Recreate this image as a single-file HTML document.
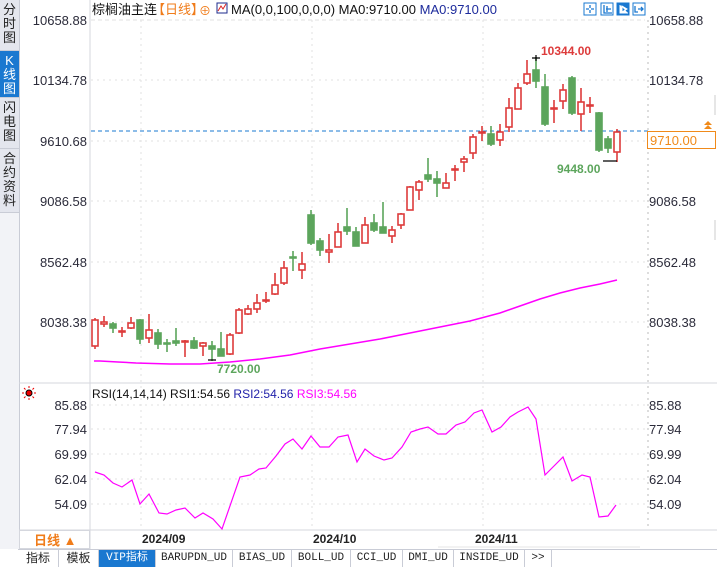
<!DOCTYPE html>
<html><head><meta charset="utf-8"><style>
html,body{margin:0;padding:0;width:717px;height:566px;overflow:hidden;background:#fff;font-family:"Liberation Sans","Noto Sans CJK SC",sans-serif}
.side{position:absolute;left:0;top:0;width:19px;height:549px;background:#f2f3f7;border-right:1px solid #c9ccd6}
.tab{position:absolute;left:0;width:19px;font-size:13px;line-height:14px;text-align:center;color:#222;background:#e4e6ee;border-bottom:1px solid #c9ccd6;padding-top:3px;box-sizing:border-box}
.bar{position:absolute;left:18px;top:549px;width:699px;height:17px;background:#fff;border-top:1px solid #c9ccd6;font-size:12px}
.bt{position:absolute;top:0;height:17px;line-height:17px;text-align:center;border-right:1px solid #c9ccd6;color:#222;font-family:"Liberation Mono","Noto Sans CJK SC",monospace;font-size:11px}
</style></head><body>
<div class="side">
<div class="tab" style="top:0;height:51px">分<br>时<br>图</div>
<div class="tab" style="top:51px;height:47px;background:#1a78d0;color:#fff">K<br>线<br>图</div>
<div class="tab" style="top:98px;height:51px">闪<br>电<br>图</div>
<div class="tab" style="top:149px;height:64px">合<br>约<br>资<br>料</div>
</div>
<svg width="717" height="566" style="position:absolute;left:0;top:0" font-family="Liberation Sans, Noto Sans CJK SC, sans-serif">
<g stroke="#e2e2e2" stroke-dasharray="2,4" stroke-width="1">
<line x1="91" y1="20" x2="645" y2="20" stroke-dasharray="4,3"/>
<line x1="91" y1="80" x2="645" y2="80"/><line x1="91" y1="141" x2="645" y2="141"/><line x1="91" y1="201" x2="645" y2="201"/><line x1="91" y1="262" x2="645" y2="262"/><line x1="91" y1="322" x2="645" y2="322"/>
<line x1="91" y1="405" x2="645" y2="405"/><line x1="91" y1="429" x2="645" y2="429"/><line x1="91" y1="454" x2="645" y2="454"/><line x1="91" y1="479" x2="645" y2="479"/><line x1="91" y1="504" x2="645" y2="504"/>
<line x1="141" y1="20" x2="141" y2="530"/><line x1="312" y1="20" x2="312" y2="530"/><line x1="483" y1="20" x2="483" y2="530"/>
<line x1="648" y1="20" x2="648" y2="530" stroke="#bbb"/>
</g>
<line x1="90" y1="0" x2="90" y2="549" stroke="#d5d7de"/>
<line x1="19" y1="383" x2="717" y2="383" stroke="#d5d7de"/>
<line x1="19" y1="530" x2="717" y2="530" stroke="#d5d7de"/>
<line x1="715" y1="95" x2="715" y2="115" stroke="#ccc"/><line x1="715" y1="220" x2="715" y2="240" stroke="#ccc"/>
<g font-size="13" fill="#2b2b3a" text-anchor="end">
<text x="87" y="25">10658.88</text><text x="87" y="85">10134.78</text><text x="87" y="146">9610.68</text><text x="87" y="206">9086.58</text><text x="87" y="267">8562.48</text><text x="87" y="327">8038.38</text>
<text x="87" y="410">85.88</text><text x="87" y="434">77.94</text><text x="87" y="459">69.99</text><text x="87" y="484">62.04</text><text x="87" y="509">54.09</text>
</g>
<g font-size="13" fill="#2b2b3a">
<text x="649" y="25">10658.88</text><text x="649" y="85">10134.78</text><text x="649" y="206">9086.58</text><text x="649" y="267">8562.48</text><text x="649" y="327">8038.38</text>
<text x="649" y="410">85.88</text><text x="649" y="434">77.94</text><text x="649" y="459">69.99</text><text x="649" y="484">62.04</text><text x="649" y="509">54.09</text>
</g>
<text x="92" y="14" font-size="13" fill="#111">棕榈油主连</text>
<text x="152" y="14" font-size="13" fill="#f07c1a">【日线】</text>
<text x="199" y="15" font-size="12" fill="#f07c1a">⊕</text>
<rect x="217" y="3" width="10" height="10" fill="#fff" stroke="#1d2b8c"/><polyline points="218,11 221,6 223,9 226,4" fill="none" stroke="#d22" stroke-width="1"/>
<text x="231" y="14" font-size="13" fill="#111">MA(0,0,100,0,0,0)  MA0:9710.00  <tspan fill="#1d2b9c">MA0:9710.00</tspan></text>
<g stroke="#1a78d0" fill="#fff"><rect x="584" y="3" width="12" height="12"/><rect x="601" y="3" width="12" height="12"/><rect x="617" y="3" width="12" height="12" fill="#1a78d0"/><rect x="633" y="3" width="12" height="12"/></g>
<g stroke="#1a78d0" stroke-width="1.3" fill="none"><path d="M590 5v3M590 10v3M586 9h3M591 9h3"/><path d="M604 5v8h8M607 6v6M606 9h5"/><path d="M635 6v6h3M638 9h5M641 7l2 2-2 2"/></g>
<path d="M620 5v8h8M622 6l5 3-5 3z" stroke="#fff" fill="#fff" stroke-width="1"/>
<line x1="91" y1="131" x2="648" y2="131" stroke="#1a78d0" stroke-dasharray="4,3"/>
<polyline fill="none" stroke="#f0f" stroke-width="1.5" points="94,361 100,361 118,362 136,363 170,364 200,364 230,362 260,359 290,355 320,349 350,344 380,339 410,333 440,327 470,321 500,313 520,306 540,299 560,293 580,288 600,284 617,280"/>
<g id="c" stroke-width="1.6">
<g stroke="#dd3b3b" fill="#fff">
<line x1="95" y1="318" x2="95" y2="349"/><rect x="92" y="320" width="6" height="26"/>
<line x1="104" y1="316" x2="104" y2="327"/><rect x="101" y="322" width="6" height="2"/>
<line x1="122" y1="327" x2="122" y2="337"/><rect x="119" y="331" width="6" height="1"/>
<line x1="131" y1="317" x2="131" y2="329"/><rect x="128" y="323" width="6" height="5"/>
<line x1="149" y1="314" x2="149" y2="343"/><rect x="146" y="330" width="6" height="8"/>
<line x1="185" y1="340" x2="185" y2="357"/><rect x="182" y="341" width="6" height="1"/>
<line x1="203" y1="342" x2="203" y2="356"/><rect x="200" y="343" width="6" height="3"/>
<line x1="230" y1="333" x2="230" y2="355"/><rect x="227" y="335" width="6" height="19"/>
<line x1="239" y1="308" x2="239" y2="334"/><rect x="236" y="310" width="6" height="23"/>
<line x1="248" y1="305" x2="248" y2="315"/><rect x="245" y="309" width="6" height="5"/>
<line x1="257" y1="294" x2="257" y2="313"/><rect x="254" y="303" width="6" height="6"/>
<line x1="266" y1="292" x2="266" y2="303"/><rect x="263" y="300" width="6" height="1"/>
<line x1="275" y1="273" x2="275" y2="295"/><rect x="272" y="285" width="6" height="9"/>
<line x1="284" y1="261" x2="284" y2="285"/><rect x="281" y="268" width="6" height="15"/>
<line x1="302" y1="252" x2="302" y2="279"/><rect x="299" y="264" width="6" height="6"/>
<line x1="329" y1="234" x2="329" y2="263"/><rect x="326" y="250" width="6" height="2"/>
<line x1="338" y1="223" x2="338" y2="247"/><rect x="335" y="232" width="6" height="15"/>
<line x1="365" y1="217" x2="365" y2="243"/><rect x="362" y="225" width="6" height="18"/>
<line x1="392" y1="226" x2="392" y2="243"/><rect x="389" y="230" width="6" height="6"/>
<line x1="401" y1="213" x2="401" y2="229"/><rect x="398" y="214" width="6" height="11"/>
<line x1="410" y1="186" x2="410" y2="210"/><rect x="407" y="187" width="6" height="23"/>
<line x1="419" y1="180" x2="419" y2="200"/><rect x="416" y="182" width="6" height="8"/>
<line x1="446" y1="173" x2="446" y2="188"/><rect x="443" y="183" width="6" height="5"/>
<line x1="455" y1="165" x2="455" y2="181"/><rect x="452" y="169" width="6" height="1"/>
<line x1="464" y1="156" x2="464" y2="172"/><rect x="461" y="159" width="6" height="3"/>
<line x1="473" y1="134" x2="473" y2="159"/><rect x="470" y="137" width="6" height="16"/>
<line x1="482" y1="126" x2="482" y2="141"/><rect x="479" y="132" width="6" height="1"/>
<line x1="500" y1="124" x2="500" y2="146"/><rect x="497" y="132" width="6" height="8"/>
<line x1="509" y1="98" x2="509" y2="132"/><rect x="506" y="108" width="6" height="19"/>
<line x1="518" y1="83" x2="518" y2="109"/><rect x="515" y="88" width="6" height="21"/>
<line x1="527" y1="60" x2="527" y2="85"/><rect x="524" y="74" width="6" height="9"/>
<line x1="554" y1="100" x2="554" y2="123"/><rect x="551" y="108" width="6" height="1"/>
<line x1="563" y1="84" x2="563" y2="109"/><rect x="560" y="90" width="6" height="11"/>
<line x1="581" y1="88" x2="581" y2="131"/><rect x="578" y="102" width="6" height="12"/>
<line x1="590" y1="97" x2="590" y2="113"/><rect x="587" y="105" width="6" height="1"/>
<line x1="617" y1="129" x2="617" y2="162"/><rect x="614" y="132" width="6" height="20"/>
</g>
<g stroke="#5ca55c" fill="#5ca55c">
<line x1="113" y1="322" x2="113" y2="333"/><rect x="110" y="324" width="6" height="4"/>
<line x1="140" y1="319" x2="140" y2="344"/><rect x="137" y="320" width="6" height="19"/>
<line x1="158" y1="329" x2="158" y2="349"/><rect x="155" y="333" width="6" height="11"/>
<line x1="167" y1="339" x2="167" y2="352"/><rect x="164" y="343" width="6" height="1"/>
<line x1="176" y1="328" x2="176" y2="346"/><rect x="173" y="341" width="6" height="2"/>
<line x1="194" y1="337" x2="194" y2="349"/><rect x="191" y="341" width="6" height="7"/>
<line x1="212" y1="341" x2="212" y2="361"/><rect x="209" y="346" width="6" height="3"/>
<line x1="221" y1="332" x2="221" y2="356"/><rect x="218" y="349" width="6" height="7"/>
<line x1="293" y1="251" x2="293" y2="271"/><rect x="290" y="257" width="6" height="1"/>
<line x1="311" y1="210" x2="311" y2="245"/><rect x="308" y="215" width="6" height="28"/>
<line x1="320" y1="238" x2="320" y2="256"/><rect x="317" y="241" width="6" height="9"/>
<line x1="347" y1="208" x2="347" y2="235"/><rect x="344" y="227" width="6" height="4"/>
<line x1="356" y1="227" x2="356" y2="246"/><rect x="353" y="232" width="6" height="14"/>
<line x1="374" y1="214" x2="374" y2="232"/><rect x="371" y="223" width="6" height="7"/>
<line x1="383" y1="202" x2="383" y2="233"/><rect x="380" y="227" width="6" height="6"/>
<line x1="428" y1="158" x2="428" y2="182"/><rect x="425" y="175" width="6" height="4"/>
<line x1="437" y1="171" x2="437" y2="197"/><rect x="434" y="179" width="6" height="4"/>
<line x1="491" y1="126" x2="491" y2="146"/><rect x="488" y="134" width="6" height="10"/>
<line x1="536" y1="57" x2="536" y2="88"/><rect x="533" y="70" width="6" height="11"/>
<line x1="545" y1="74" x2="545" y2="126"/><rect x="542" y="87" width="6" height="37"/>
<line x1="572" y1="76" x2="572" y2="115"/><rect x="569" y="78" width="6" height="35"/>
<line x1="599" y1="112" x2="599" y2="152"/><rect x="596" y="113" width="6" height="37"/>
<line x1="608" y1="136" x2="608" y2="153"/><rect x="605" y="139" width="6" height="9"/>
</g></g>
<path d="M532 58h8M536 55v6M603 161h14M208 360h8" stroke="#000" stroke-width="1.2"/>
<text x="541" y="55" font-size="12" font-weight="bold" fill="#dd3b3b">10344.00</text>
<text x="557" y="173" font-size="12" font-weight="bold" fill="#5ca55c">9448.00</text>
<text x="217" y="373" font-size="12" font-weight="bold" fill="#5ca55c">7720.00</text>
<rect x="647.5" y="131.5" width="68" height="17" fill="#fff" stroke="#f08a1a"/>
<text x="650" y="145" font-size="13" fill="#f08a1a">9710.00</text>
<path d="M704 129h8l-4-4zM704 125h8l-4-4z" fill="#f08a1a"/>
<circle cx="29" cy="393" r="3" fill="#e00" stroke="#000" stroke-width="1"/>
<path d="M29 386v2M29 398v2M22 393h2M34 393h2M24 388l1.5 1.5M34 388l-1.5 1.5M24 398l1.5-1.5M34 398l-1.5-1.5" stroke="#e00"/>
<text x="92" y="398" font-size="12" fill="#111">RSI(14,14,14) RSI1:54.56 <tspan fill="#2222aa">RSI2:54.56</tspan> <tspan fill="#f0f">RSI3:54.56</tspan></text>
<polyline fill="none" stroke="#f0f" stroke-width="1.2" points="95,472 104,475 113,483 122,487 132,480 140,504 149,494 159,513 167,514 176,510 185,508 195,518 203,513 213,519 222,529 240,477 250,475 259,469 266,468 276,456 285,444 293,439 302,449 311,436 320,447 329,447 338,437 348,435 357,462 365,449 374,456 384,460 392,458 402,447 411,432 420,429 428,427 438,434 446,434 456,425 465,422 474,413 482,410 492,432 501,427 510,417 518,412 528,407 536,419 545,475 554,466 563,457 572,481 582,475 590,477 599,517 608,516 616,505"/>
<rect x="19.5" y="530.5" width="70" height="18" fill="#fff" stroke="#d5d7de"/>
<text x="34" y="545" font-size="13" font-weight="bold" fill="#f07c1a">日线 ▲</text>
<g font-size="12" font-weight="bold" fill="#222"><text x="142" y="543">2024/09</text><text x="313" y="543">2024/10</text><text x="475" y="543">2024/11</text></g>
<line x1="438" y1="547" x2="640" y2="547" stroke="#e5e5e5"/>
</svg>
<div class="bar">
<div class="bt" style="left:0;width:40px;font-family:'Liberation Sans','Noto Sans CJK SC',sans-serif;font-size:12px">指标</div>
<div class="bt" style="left:41px;width:39px;font-family:'Liberation Sans','Noto Sans CJK SC',sans-serif;font-size:12px">模板</div>
<div class="bt" style="left:81px;width:56px;background:#1a78d0;color:#fff">VIP指标</div>
<div class="bt" style="left:138px;width:76px">BARUPDN_UD</div>
<div class="bt" style="left:215px;width:58px">BIAS_UD</div>
<div class="bt" style="left:274px;width:58px">BOLL_UD</div>
<div class="bt" style="left:333px;width:51px">CCI_UD</div>
<div class="bt" style="left:385px;width:50px">DMI_UD</div>
<div class="bt" style="left:436px;width:70px">INSIDE_UD</div>
<div class="bt" style="left:507px;width:26px">&gt;&gt;</div>
</div>
</body></html>
